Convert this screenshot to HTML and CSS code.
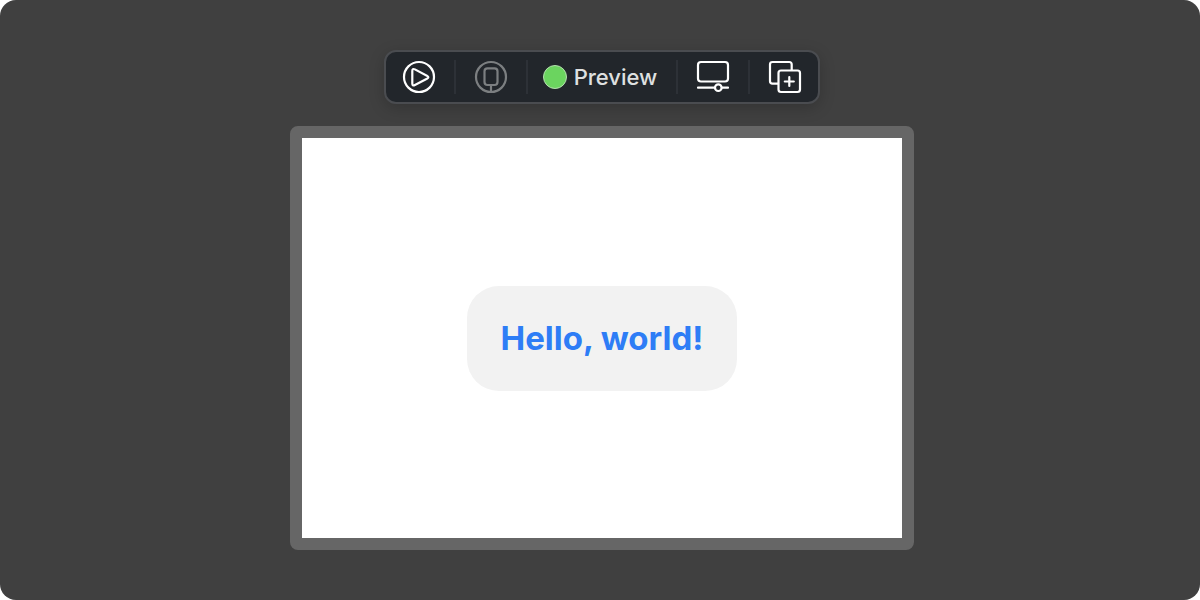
FILE: index.html
```
<!DOCTYPE html>
<html lang="en">
<head>
<meta charset="utf-8">
<title>Preview</title>
<link rel="stylesheet" href="styles.css">
</head>
<body>
<main class="canvas">
  <div class="toolbar" role="toolbar" aria-label="Preview controls">
    <button class="tool" type="button" aria-label="Live preview">
      <svg class="icon" viewBox="0 0 34 34"><circle cx="17" cy="17" r="15"/><path d="M10.300 11v12.400q0 2.900 2.600 1.600l12-6.300q2.900-1.500 0-3L12.900 9.400q-2.600-1.300-2.600 1.600z"/></svg>
    </button>
    <span class="divider"></span>
    <button class="tool" type="button" aria-label="Preview on device" disabled>
      <svg class="icon" viewBox="0 0 34 34"><circle cx="17" cy="17" r="15"/><rect x="10.500" y="8.300" width="13" height="16.700" rx="3"/><path d="M17 25v7"/></svg>
    </button>
    <span class="divider"></span>
    <button class="tool status" type="button"><span class="dot"></span>Preview</button>
    <span class="divider"></span>
    <button class="tool" type="button" aria-label="Device settings">
      <svg class="icon" viewBox="0 0 34 34"><rect x="2" y="2" width="30" height="19.500" rx="3"/><path d="M2 27.700h17M26 27.700h6"/><circle cx="22.300" cy="27.700" r="3.300"/></svg>
    </button>
    <span class="divider"></span>
    <button class="tool" type="button" aria-label="Duplicate preview">
      <svg class="icon" viewBox="0 0 34 34"><path d="M10 23.700H4.500Q2 23.700 2 21.200V4.500Q2 2 4.500 2h16.700Q23.700 2 23.700 4.500V10"/><rect x="10.500" y="10.500" width="21.500" height="21.500" rx="2.500"/><path d="M21.300 17v9M16.800 21.500h9"/></svg>
    </button>
  </div>
  <section class="stage">
    <div class="card">Hello, world!</div>
  </section>
</main>
</body>
</html>
```
FILE: styles.css
```
* {
  box-sizing: border-box;
}

body {
  margin: 0;
  background: #fff;
  font-family: Inter, "Liberation Sans", sans-serif;
}

.canvas {
  display: flex;
  flex-direction: column;
  align-items: center;
  gap: 22px;
  min-height: 100vh;
  padding: 50px 0 50px 4px;
  border-radius: 16px;
  background: #404040;
}

.toolbar {
  display: flex;
  align-items: center;
  border: 2px solid #4a4c50;
  border-radius: 12px;
  background: #22262b;
  box-shadow: 0 4px 16px rgba(0, 0, 0, 0.2);
}

.tool {
  display: flex;
  align-items: center;
  height: 50px;
  padding: 0 18px;
  border: 0;
  background: none;
  color: #fff;
  font: 500 22px/28px Inter, "Liberation Sans", sans-serif;
}

.tool:first-child {
  padding-left: 16px;
}

.tool:last-child {
  padding-right: 16px;
}

.tool:disabled {
  color: #7c7f81;
}

.status {
  gap: 7px;
  padding: 0 19px 0 15px;
  color: #dfe0e0;
}

.icon {
  width: 34px;
  height: 34px;
  fill: none;
  stroke: currentColor;
  stroke-width: 2.2;
  stroke-linecap: round;
  stroke-linejoin: round;
}

.divider {
  width: 2px;
  height: 34px;
  background: #2d3137;
}

.dot {
  width: 24px;
  height: 24px;
  border: 1px solid #b5deb0;
  border-radius: 50%;
  background: #6bd45f;
}

.stage {
  display: flex;
  flex: 1;
  align-items: center;
  justify-content: center;
  width: 90%;
  max-width: 624px;
  border: 12px solid #666;
  border-radius: 8px;
  background: #fff;
}

.card {
  padding: 32px 34px;
  border-radius: 32px;
  background: #f2f2f2;
  color: #2e7df6;
  font-size: 33px;
  font-weight: 700;
  line-height: 41px;
}
```
